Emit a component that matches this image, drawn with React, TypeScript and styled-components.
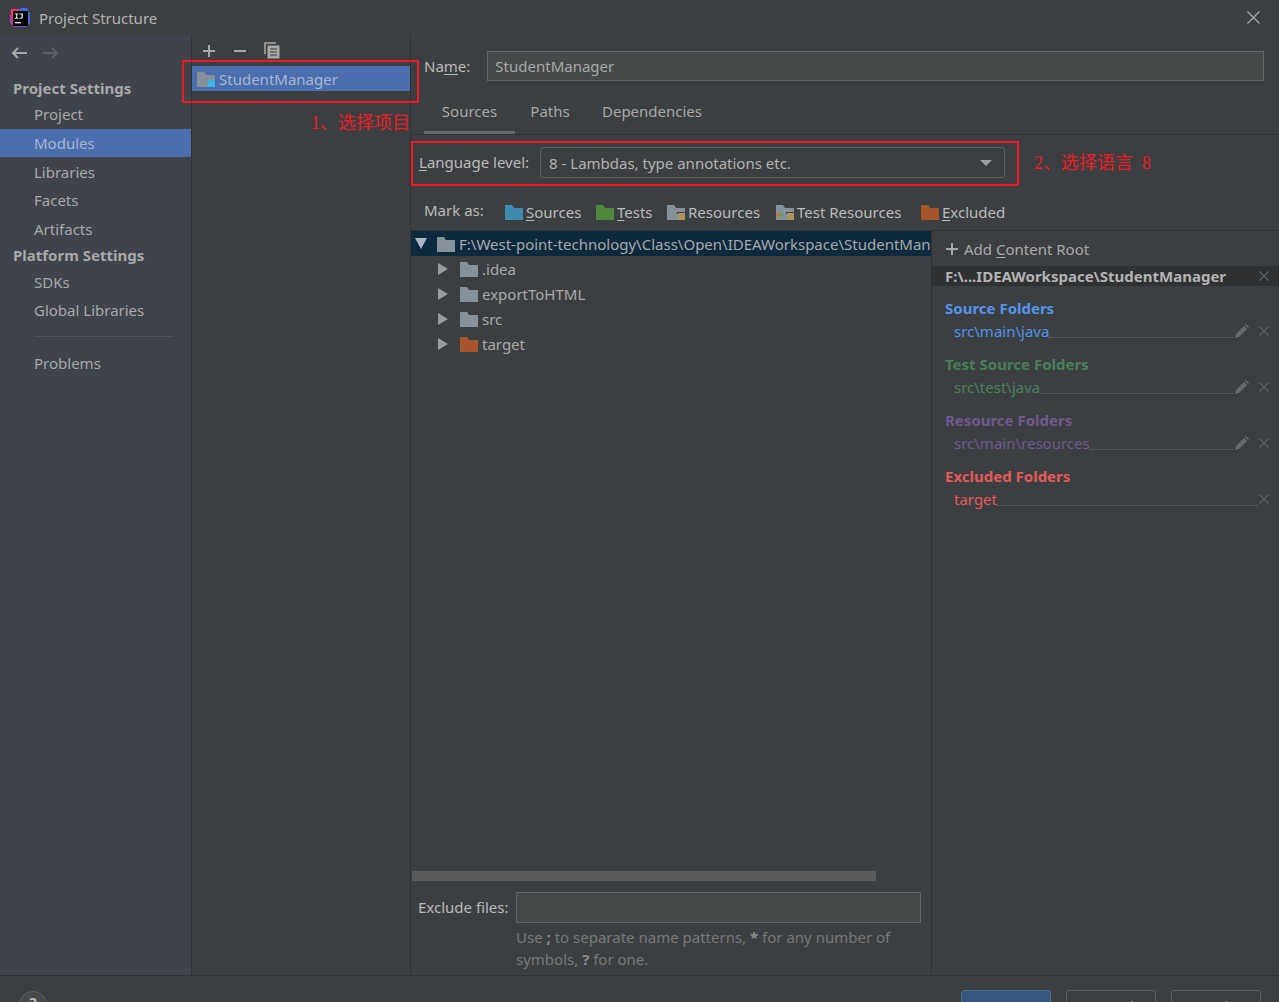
import React from 'react';
import styled, { createGlobalStyle } from 'styled-components';

const GlobalStyle = createGlobalStyle`
  html, body {
    margin: 0;
    padding: 0;
    background: #3c3f41;
    overflow: hidden;
  }
  * {
    box-sizing: border-box;
  }
`;

const Dialog = styled.div`
  position: relative;
  width: 1279px;
  height: 1002px;
  overflow: hidden;
  display: flex;
  flex-direction: column;
  background: #3c3f41;
  color: #bbbbbb;
  font-family: 'Noto Sans', 'Open Sans', sans-serif;
  font-size: 15px;
  line-height: 20px;
`;

const TitleBar = styled.div`
  height: 35px;
  flex: none;
  display: flex;
  align-items: center;
  padding: 0 19px 0 9px;
  gap: 9px;
  color: #b4b4b4;
`;

const TitleText = styled.div`
  flex: 1;
`;

const Main = styled.div`
  flex: none;
  height: 940px;
  display: flex;
`;

const Sidebar = styled.div`
  width: 192px;
  flex: none;
  background: #3e434c;
  border-right: 1px solid #323232;
  display: flex;
  flex-direction: column;
`;

const NavArrows = styled.div`
  height: 36px;
  display: flex;
  align-items: center;
  gap: 14px;
  padding: 0 0 0 10px;
`;

const GroupLabel = styled.div<{ $top: number }>`
  height: 24px;
  margin-top: ${(p) => p.$top}px;
  padding-left: 13px;
  display: flex;
  align-items: center;
  font-weight: 700;
  color: #a9a9a9;
`;

const NavItem = styled.div<{ $active?: boolean }>`
  height: 28.7px;
  padding-left: 34px;
  display: flex;
  align-items: center;
  background: ${(p) => (p.$active ? '#4b6eaf' : 'transparent')};
  color: ${(p) => (p.$active ? '#a8b6cf' : '#a9a9a9')};
`;

const NavDivider = styled.div`
  height: 1px;
  margin: 11px 18px 12px 34px;
  background: #50545a;
`;

const ModulePane = styled.div`
  width: 219px;
  flex: none;
  border-right: 1px solid #323232;
  display: flex;
  flex-direction: column;
`;

const ModuleToolbar = styled.div`
  height: 31px;
  display: flex;
  align-items: center;
  padding: 0 0 0 10px;
  gap: 17px;
`;

const ModuleRow = styled.div`
  height: 25px;
  width: 218px;
  display: flex;
  align-items: center;
  gap: 3px;
  padding-left: 4px;
  background: #4b6eaf;
  color: #a8b6cf;
`;

const Detail = styled.div`
  flex: 1;
  min-width: 0;
  display: flex;
  flex-direction: column;
`;

const NameRow = styled.div`
  height: 61px;
  flex: none;
  padding: 16px 15px 0 13px;
  display: flex;
  gap: 17px;
`;

const FieldLabel = styled.div`
  flex: none;
  height: 30px;
  display: flex;
  align-items: center;
  white-space: pre;
`;

const Mnemonic = styled.span`
  text-decoration: underline;
  text-underline-offset: 2px;
`;

const TextField = styled.div`
  flex: 1;
  height: 30px;
  display: flex;
  align-items: center;
  padding-left: 7px;
  background: #45494a;
  border: 1px solid #646464;
  color: #a9a9a9;
`;

const TabBar = styled.div`
  height: 39px;
  flex: none;
  padding-left: 13px;
  display: flex;
  border-bottom: 1px solid #323232;
`;

const Tab = styled.div<{ $active?: boolean; $w: number }>`
  width: ${(p) => p.$w}px;
  height: 38px;
  display: flex;
  justify-content: center;
  align-items: center;
  padding-bottom: 5px;
  color: #a9a9a9;
  border-bottom: 3px solid ${(p) => (p.$active ? '#646a70' : 'transparent')};
`;

const LanguageRow = styled.div`
  height: 56px;
  flex: none;
  padding: 12px 0 0 8px;
  display: flex;
  gap: 11px;
`;

const Combo = styled.div`
  width: 465px;
  height: 31px;
  display: flex;
  align-items: center;
  justify-content: space-between;
  padding: 0 12px 0 8px;
  border: 1px solid #5e6060;
  border-radius: 3px;
  background: #3c3f41;
  color: #b4b4b4;
`;

const ComboArrow = styled.div`
  width: 0;
  height: 0;
  border-left: 6px solid transparent;
  border-right: 6px solid transparent;
  border-top: 6px solid #9a9d9f;
`;

const MarkRow = styled.div`
  height: 40px;
  flex: none;
  padding: 2px 0 0 13px;
  display: flex;
  align-items: center;
  border-bottom: 1px solid #323232;
`;

const MarkLabel = styled.div`
  width: 81px;
  margin-top: -4px;
`;

const MarkItem = styled.div<{ $w: number }>`
  width: ${(p) => p.$w}px;
  display: flex;
  align-items: center;
  gap: 3px;
`;

const Split = styled.div`
  flex: 1;
  min-height: 0;
  display: flex;
`;

const TreePane = styled.div`
  width: 521px;
  flex: none;
  border-right: 1px solid #323232;
  display: flex;
  flex-direction: column;
`;

const Tree = styled.div`
  flex: 1;
  min-height: 0;
`;

const TreeRow = styled.div<{ $selected?: boolean; $depth: number }>`
  height: 25px;
  display: flex;
  align-items: center;
  padding-left: ${(p) => (p.$depth === 0 ? 4 : 27)}px;
  background: ${(p) => (p.$selected ? '#0d293e' : 'transparent')};
  color: #a9a9a9;
  white-space: nowrap;
  overflow: hidden;
`;

const Expander = styled.div<{ $open?: boolean }>`
  flex: none;
  width: 0;
  height: 0;
  margin-right: 12px;
  ${(p) =>
    p.$open
      ? `border-left: 6px solid transparent;
         border-right: 6px solid transparent;
         border-top: 11px solid #a9b7c6;
         margin-right: 10px;`
      : `border-top: 6px solid transparent;
         border-bottom: 6px solid transparent;
         border-left: 10px solid #9a9d9f;`}
`;

const RowLabel = styled.span`
  margin-left: 4px;
`;

const ScrollTrack = styled.div`
  height: 10px;
  flex: none;
  margin-bottom: 11px;
  padding-left: 1px;
`;

const ScrollThumb = styled.div`
  width: 464px;
  height: 10px;
  background: #595b5d;
`;

const ExcludeRow = styled.div`
  flex: none;
  display: flex;
  padding: 0 10px 0 7px;
  gap: 8px;
`;

const ExcludeField = styled.div`
  flex: 1;
  height: 31px;
  background: #45494a;
  border: 1px solid #646464;
`;

const Hint = styled.div`
  flex: none;
  height: 52px;
  padding: 3px 20px 0 105px;
  font-size: 15px;
  line-height: 22px;
  color: #787878;

  b {
    color: #8c8c8c;
  }
`;

const RootsPane = styled.div`
  flex: 1;
  min-width: 0;
  display: flex;
  flex-direction: column;
`;

const AddRoot = styled.div`
  height: 35px;
  flex: none;
  display: flex;
  align-items: center;
  gap: 5px;
  padding: 0 0 0 13px;
  color: #a9a9a9;
`;

const RootHeader = styled.div`
  height: 20px;
  flex: none;
  display: flex;
  align-items: center;
  justify-content: space-between;
  padding: 0 10px 0 13px;
  background: #2f3133;
  font-weight: 700;
  color: #b4b4b4;
`;

const FolderGroup = styled.div<{ $color: string }>`
  flex: none;
  height: 56px;
  padding: 11px 10px 0 13px;
  color: ${(p) => p.$color};
`;

const GroupTitle = styled.div`
  height: 22px;
  display: flex;
  align-items: center;
  font-weight: 700;
`;

const FolderRow = styled.div`
  height: 23px;
  padding-left: 9px;
  display: flex;
  align-items: center;
`;

const Leader = styled.div`
  flex: 1;
  height: 1px;
  align-self: flex-end;
  margin-bottom: 4px;
  border-bottom: 1px dotted #6a6c6e;
`;

const RowActions = styled.div`
  flex: none;
  display: flex;
  align-items: center;
  gap: 10px;
  margin-left: 2px;
`;

const Footer = styled.div`
  flex: 1;
  border-top: 1px solid #323232;
  display: flex;
  padding: 14px 18px 0 19px;
  gap: 15px;
`;

const HelpButton = styled.div`
  width: 28px;
  height: 28px;
  flex: none;
  margin-top: 1px;
  margin-right: auto;
  border-radius: 50%;
  border: 1px solid #5e6060;
  background: #46494b;
  text-align: center;
  font-weight: 700;
  color: #bbbbbb;
`;

const FooterButton = styled.div<{ $primary?: boolean }>`
  width: 90px;
  height: 28px;
  flex: none;
  border-radius: 3px;
  text-align: center;
  line-height: 24px;
  padding-top: 3px;
  border: 1px solid ${(p) => (p.$primary ? '#4c708c' : '#5e6060')};
  background: ${(p) => (p.$primary ? '#365880' : '#3c3f41')};
  color: ${(p) => (p.$primary ? '#d0d0d0' : '#bbbbbb')};
`;

const Callout = styled.div<{ $x: number; $y: number; $w: number; $h: number }>`
  position: absolute;
  left: ${(p) => p.$x}px;
  top: ${(p) => p.$y}px;
  width: ${(p) => p.$w}px;
  height: ${(p) => p.$h}px;
  border: 2px solid #ed1c24;
  pointer-events: none;
`;

const CalloutText = styled.div<{ $x: number; $y: number }>`
  position: absolute;
  left: ${(p) => p.$x}px;
  top: ${(p) => p.$y}px;
  font-family: 'Liberation Serif', 'Noto Sans CJK SC', serif;
  font-size: 18px;
  line-height: 22px;
  color: #ed1c24;
  white-space: pre;
`;

const Folder = ({ color, w = 18, badge }: { color: string; w?: number; badge?: React.ReactNode }) => (
  <svg width={w} height={16} viewBox="0 0 18 16" style={{ flex: 'none' }}>
    <path d="M0 1h7l2 3h9v12H0z" fill={color} />
    {badge}
  </svg>
);

const stripes = (
  <g fill="#c8963c">
    <rect x="10" y="8" width="8" height="2" fill="#3c3f41" />
    <rect x="11" y="9" width="7" height="1.5" />
    <rect x="11" y="11.5" width="7" height="1.5" />
    <rect x="11" y="14" width="7" height="1.5" />
  </g>
);

const Logo = () => (
  <svg width={21} height={20} viewBox="0 0 21 20" style={{ flex: 'none' }}>
    <path d="M2 1h9L6 10 1 14z" fill="#ee3a6a" />
    <path d="M1 6l5 6-1 7-4-4z" fill="#b83aa0" />
    <path d="M11 0h7l3 6v9l-4 4h-6z" fill="#3f6be0" />
    <path d="M5 19l4-6h8v6z" fill="#7a4adf" />
    <rect x="4" y="3" width="15" height="15" fill="#000" />
    <rect x="6" y="14" width="6" height="1.4" fill="#ddd" />
    <path d="M6 5.5h3.4v1H8.2v3.2h1.2v1H6v-1h1.1V6.5H6zM10.4 5.5h3.4v4.2l-1 1h-2.3v-1h2V6.5h-2.1z" fill="#eee" />
  </svg>
);

const ArrowLeft = ({ color }: { color: string }) => (
  <svg width={18} height={14} viewBox="0 0 18 14" style={{ flex: 'none' }}>
    <path d="M17 7H3M8 2L3 7l5 5" fill="none" stroke={color} strokeWidth={2} />
  </svg>
);

const ArrowRight = ({ color }: { color: string }) => (
  <svg width={18} height={14} viewBox="0 0 18 14" style={{ flex: 'none' }}>
    <path d="M1 7h14M10 2l5 5-5 5" fill="none" stroke={color} strokeWidth={2} />
  </svg>
);

const Plus = ({ color = '#a9a9a9' }: { color?: string }) => (
  <svg width={14} height={14} viewBox="0 0 14 14" style={{ flex: 'none' }}>
    <path d="M7 1v12M1 7h12" stroke={color} strokeWidth={2} />
  </svg>
);

const Minus = () => (
  <svg width={14} height={14} viewBox="0 0 14 14" style={{ flex: 'none' }}>
    <path d="M1 7h12" stroke="#a9a9a9" strokeWidth={2} />
  </svg>
);

const CopyIcon = () => (
  <svg width={16} height={17} viewBox="0 0 16 17" style={{ flex: 'none' }}>
    <path d="M1 12V1h11" fill="none" stroke="#a9a9a9" strokeWidth={1.5} />
    <rect x="3.5" y="3.5" width="12" height="13" fill="#a9a9a9" />
    <path d="M6 7h7M6 10h7M6 13h7" stroke="#3c3f41" strokeWidth={1.2} />
  </svg>
);

const Cross = () => (
  <svg width={10} height={10} viewBox="0 0 10 10" style={{ flex: 'none' }}>
    <path d="M.5.5l9 9M9.5.5l-9 9" stroke="#5f6264" strokeWidth={1.2} />
  </svg>
);

const Pencil = () => (
  <svg width={14} height={14} viewBox="0 0 14 14" style={{ flex: 'none' }}>
    <path d="M0 14l1-4 8-8 3 3-8 8zM10 1l1-1 3 3-1 1z" fill="#6a6d6f" />
  </svg>
);

const folderGroups = [
  { title: 'Source Folders', path: 'src\\main\\java', color: '#5394ec', edit: true },
  { title: 'Test Source Folders', path: 'src\\test\\java', color: '#4a8059', edit: true },
  { title: 'Resource Folders', path: 'src\\main\\resources', color: '#71588f', edit: true },
  { title: 'Excluded Folders', path: 'target', color: '#e65a5a', edit: false },
];

const treeChildren = [
  { name: '.idea', color: '#86929b' },
  { name: 'exportToHTML', color: '#86929b' },
  { name: 'src', color: '#86929b' },
  { name: 'target', color: '#a8552c' },
];

export default function App() {
  return (
    <Dialog>
      <GlobalStyle />
      <TitleBar>
        <Logo />
        <TitleText>Project Structure</TitleText>
        <svg width={13} height={13} viewBox="0 0 13 13">
          <path d="M.5.5l12 12M12.5.5l-12 12" stroke="#a9a9a9" strokeWidth={1.2} />
        </svg>
      </TitleBar>
      <Main>
        <Sidebar>
          <NavArrows>
            <ArrowLeft color="#a9a9a9" />
            <ArrowRight color="#5c5f62" />
          </NavArrows>
          <GroupLabel $top={5}>Project Settings</GroupLabel>
          <NavItem>Project</NavItem>
          <NavItem $active>Modules</NavItem>
          <NavItem>Libraries</NavItem>
          <NavItem>Facets</NavItem>
          <NavItem>Artifacts</NavItem>
          <GroupLabel $top={0}>Platform Settings</GroupLabel>
          <NavItem>SDKs</NavItem>
          <NavItem>Global Libraries</NavItem>
          <NavDivider />
          <NavItem>Problems</NavItem>
        </Sidebar>
        <ModulePane>
          <ModuleToolbar>
            <Plus />
            <Minus />
            <CopyIcon />
          </ModuleToolbar>
          <ModuleRow>
            <Folder
              color="#86929b"
              w={20}
              badge={<rect x="11" y="9" width="7" height="7" fill="#3db3e6" />}
            />
            StudentManager
          </ModuleRow>
        </ModulePane>
        <Detail>
          <NameRow>
            <FieldLabel>
              Na<Mnemonic>m</Mnemonic>e:
            </FieldLabel>
            <TextField>StudentManager</TextField>
          </NameRow>
          <TabBar>
            <Tab $active $w={91}>Sources</Tab>
            <Tab $w={70}>Paths</Tab>
            <Tab $w={134}>Dependencies</Tab>
          </TabBar>
          <LanguageRow>
            <FieldLabel>
              <Mnemonic>L</Mnemonic>anguage level:
            </FieldLabel>
            <Combo>
              8 - Lambdas, type annotations etc.
              <ComboArrow />
            </Combo>
          </LanguageRow>
          <MarkRow>
            <MarkLabel>Mark as:</MarkLabel>
            <MarkItem $w={91}>
              <Folder color="#3f8aaf" />
              <span><Mnemonic>S</Mnemonic>ources</span>
            </MarkItem>
            <MarkItem $w={71}>
              <Folder color="#4f8a3c" />
              <span><Mnemonic>T</Mnemonic>ests</span>
            </MarkItem>
            <MarkItem $w={109}>
              <Folder color="#86929b" badge={stripes} />
              Resources
            </MarkItem>
            <MarkItem $w={145}>
              <Folder
                color="#86929b"
                badge={
                  <>
                    {stripes}
                    <path d="M0 11l3-3v6z" fill="#e0662a" />
                    <path d="M7 11L4 8v6z" fill="#4fae3c" />
                  </>
                }
              />
              Test Resources
            </MarkItem>
            <MarkItem $w={90}>
              <Folder color="#a8552c" />
              <span><Mnemonic>E</Mnemonic>xcluded</span>
            </MarkItem>
          </MarkRow>
          <Split>
            <TreePane>
              <Tree>
                <TreeRow $selected $depth={0}>
                  <Expander $open />
                  <Folder color="#86929b" />
                  <RowLabel>F:\West-point-technology\Class\Open\IDEAWorkspace\StudentManager</RowLabel>
                </TreeRow>
                {treeChildren.map((c) => (
                  <TreeRow key={c.name} $depth={1}>
                    <Expander />
                    <Folder color={c.color} />
                    <RowLabel>{c.name}</RowLabel>
                  </TreeRow>
                ))}
              </Tree>
              <ScrollTrack>
                <ScrollThumb />
              </ScrollTrack>
              <ExcludeRow>
                <FieldLabel>Exclude files:</FieldLabel>
                <ExcludeField />
              </ExcludeRow>
              <Hint>
                Use <b>;</b> to separate name patterns, <b>*</b> for any number of symbols, <b>?</b> for one.
              </Hint>
            </TreePane>
            <RootsPane>
              <AddRoot>
                <Plus />
                <span>Add <Mnemonic>C</Mnemonic>ontent Root</span>
              </AddRoot>
              <RootHeader>
                F:\...IDEAWorkspace\StudentManager
                <Cross />
              </RootHeader>
              {folderGroups.map((g) => (
                <FolderGroup key={g.title} $color={g.color}>
                  <GroupTitle>{g.title}</GroupTitle>
                  <FolderRow>
                    {g.path}
                    <Leader />
                    <RowActions>
                      {g.edit && <Pencil />}
                      <Cross />
                    </RowActions>
                  </FolderRow>
                </FolderGroup>
              ))}
            </RootsPane>
          </Split>
        </Detail>
      </Main>
      <Footer>
        <HelpButton>?</HelpButton>
        <FooterButton $primary>OK</FooterButton>
        <FooterButton>Cancel</FooterButton>
        <FooterButton>Apply</FooterButton>
      </Footer>
      <Callout $x={182} $y={60} $w={237} $h={43} />
      <Callout $x={411} $y={141} $w={608} $h={45} />
      <CalloutText $x={311} $y={112}>1、选择项目</CalloutText>
      <CalloutText $x={1034} $y={152}>2、选择语言  8</CalloutText>
    </Dialog>
  );
}
